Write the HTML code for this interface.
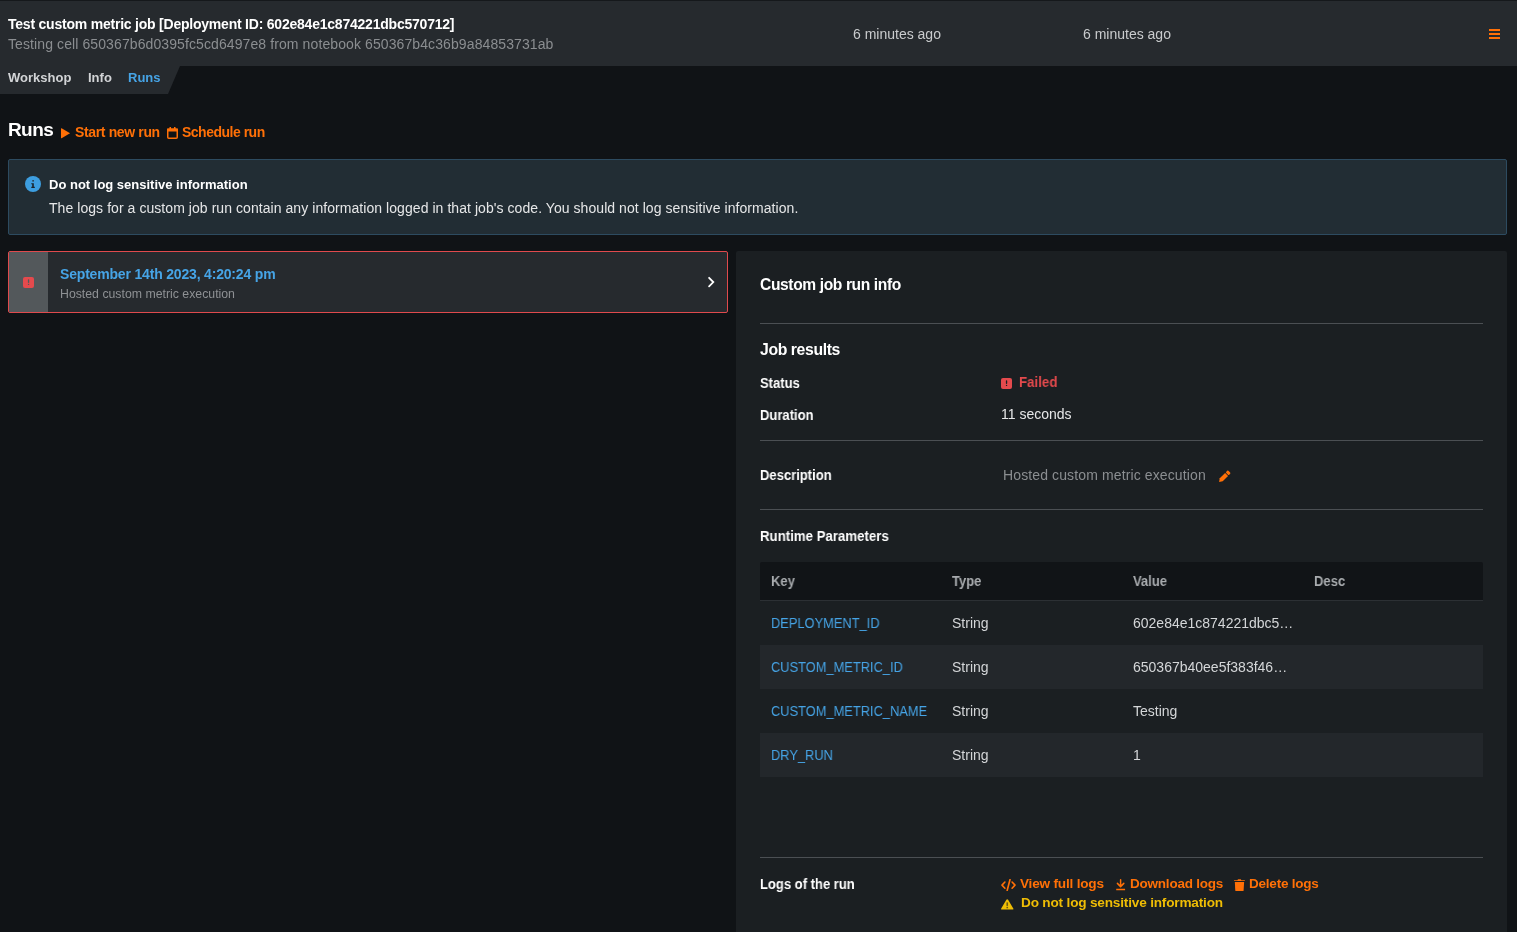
<!DOCTYPE html>
<html><head><meta charset="utf-8">
<style>
*{box-sizing:border-box;margin:0;padding:0}
html,body{width:1517px;height:932px;overflow:hidden;-webkit-font-smoothing:antialiased;background:#101316;font-family:"Liberation Sans",sans-serif;color:#e9eaeb}
.abs{position:absolute;white-space:nowrap;will-change:transform}
#topline{position:absolute;left:0;top:0;width:1517px;height:1px;background:#15181b}
#header{position:absolute;left:0;top:1px;width:1517px;height:65px;background:#262a2e}
#tabbar{position:absolute;left:0;top:66px;width:180px;height:28px;background:#262a2e;clip-path:polygon(0 0,180px 0,168px 28px,0 28px)}
.b{font-weight:bold}
.orange{color:#ff7007}
#alert{position:absolute;left:8px;top:159px;width:1499px;height:76px;background:#222d34;border:1px solid #2d4b60;border-radius:2px}
#card{position:absolute;left:8px;top:251px;width:720px;height:62px;background:#262a2e;border:1px solid #e04a4d;border-radius:2px;overflow:hidden}
#strip{position:absolute;left:0;top:0;width:39px;height:60px;background:#53585b}
#panel{position:absolute;left:736px;top:251px;width:771px;height:700px;background:#1b1f22;border-radius:2px}
.hr{position:absolute;left:760px;width:723px;height:1px;background:#4b4f53}
#table{position:absolute;left:760px;top:562px;width:723px}
.row{position:relative;height:44px}
.row.h{height:39px;background:#111417;border-bottom:1px solid #2c3034;border-radius:2px 2px 0 0}
.row.s{background:#23272b}
.cell{position:absolute;top:0;white-space:nowrap;font-size:14px;line-height:44px;will-change:transform}
.key{font-size:14px;transform:scaleX(0.918);transform-origin:0 0}
.h .cell{line-height:38px;font-weight:bold;color:#a9acaf;transform:scaleX(0.93);transform-origin:0 0}
.key{color:#46a4e6}
.val{color:#d4d6d8}
</style></head><body>
<div id="topline"></div>
<div id="header"></div>
<div id="tabbar"></div>

<div class="abs b" id="t_title" style="left:8px;top:14px;font-size:14px;letter-spacing:-0.22px;line-height:20px;color:#fff">Test custom metric job [Deployment ID: 602e84e1c874221dbc570712]</div>
<div class="abs" id="t_sub" style="left:8px;top:34px;font-size:14px;letter-spacing:0.1px;line-height:20px;color:#8b8e91">Testing cell 650367b6d0395fc5cd6497e8 from notebook 650367b4c36b9a84853731ab</div>
<div class="abs" id="t_time1" style="left:853px;top:24px;font-size:14px;line-height:20px;color:#c9cbcd">6 minutes ago</div>
<div class="abs" id="t_time2" style="left:1083px;top:24px;font-size:14px;line-height:20px;color:#c9cbcd">6 minutes ago</div>
<svg class="abs" style="left:1489px;top:29px" width="12" height="11" viewBox="0 0 12 11"><rect x="0" y="0" width="11" height="2" fill="#ff7007"/><rect x="0" y="4" width="11" height="2" fill="#ff7007"/><rect x="0" y="8" width="11" height="2" fill="#ff7007"/></svg>

<div class="abs b" id="tab1" style="left:8px;top:68px;font-size:13px;line-height:20px;color:#d2d4d6">Workshop</div>
<div class="abs b" id="tab2" style="left:88px;top:68px;font-size:13px;line-height:20px;color:#d2d4d6">Info</div>
<div class="abs b" id="tab3" style="left:128px;top:68px;font-size:13px;line-height:20px;color:#46a4e6">Runs</div>

<div class="abs b" id="h_runs" style="left:8px;top:118px;font-size:19px;letter-spacing:-0.6px;line-height:24px;color:#fff">Runs</div>
<svg class="abs" style="left:61px;top:128px" width="9" height="10.5" viewBox="0 0 9 10.5"><path d="M0.6 0.3 Q0 0 0 0.8 V9.7 Q0 10.5 0.6 10.2 L8.6 5.6 Q9 5.25 8.6 4.9 Z" fill="#ff7007"/></svg>
<div class="abs b orange" id="l_start" style="left:75px;top:123px;font-size:14px;letter-spacing:-0.36px;line-height:18px">Start new run</div>
<svg class="abs" style="left:167px;top:127px" width="11" height="12" viewBox="0 0 11 12"><rect x="0.75" y="2.25" width="9.5" height="9" rx="1" fill="none" stroke="#ff7007" stroke-width="1.5"/><rect x="0" y="1.5" width="11" height="3" fill="#ff7007"/><rect x="2.5" y="0" width="1.5" height="2" fill="#ff7007"/><rect x="7" y="0" width="1.5" height="2" fill="#ff7007"/></svg>
<div class="abs b orange" id="l_sched" style="left:182px;top:123px;font-size:14px;letter-spacing:-0.5px;line-height:18px">Schedule run</div>

<div id="alert"></div>
<svg class="abs" style="left:25px;top:176px" width="16" height="16" viewBox="0 0 16 16"><circle cx="8" cy="8" r="8" fill="#3d9ee0"/><rect x="7.3" y="4" width="1.6" height="1.6" fill="#2a3f50"/><path d="M6.3 7.2 H8.8 V10.8 H9.8 V12 H6.3 V10.8 H7.2 V8.3 H6.3 Z" fill="#1a2228"/></svg>
<div class="abs b" id="a_title" style="left:49px;top:176px;font-size:13px;line-height:18px;color:#fff">Do not log sensitive information</div>
<div class="abs" id="a_body" style="left:49px;top:199px;font-size:14px;letter-spacing:0.06px;line-height:18px;color:#e6e7e8">The logs for a custom job run contain any information logged in that job's code. You should not log sensitive information.</div>

<div id="card"><div id="strip"></div></div>
<svg class="abs" style="left:23px;top:277px" width="11" height="11" viewBox="0 0 11 11"><rect x="0" y="0" width="11" height="11" rx="2" fill="#e44a4d"/><rect x="4.9" y="2.3" width="1.3" height="3.6" rx="0.6" fill="#53585b"/><circle cx="5.55" cy="7.4" r="0.7" fill="#53585b"/></svg>
<div class="abs b" id="c_date" style="left:60px;top:265px;font-size:14px;letter-spacing:-0.18px;line-height:18px;color:#46a4e6">September 14th 2023, 4:20:24 pm</div>
<div class="abs" id="c_sub" style="left:60px;top:286px;font-size:12.3px;line-height:16px;color:#8e9194">Hosted custom metric execution</div>
<svg class="abs" style="left:707px;top:276px" width="9" height="12" viewBox="0 0 9 12"><path d="M2.1 1.8 L6.3 6.1 L2.1 10.3" fill="none" stroke="#fff" stroke-width="1.8" stroke-linecap="round" stroke-linejoin="miter"/></svg>

<div id="panel"></div>
<div class="abs b" id="p_title" style="left:760px;top:275px;font-size:15.6px;letter-spacing:-0.38px;line-height:20px;color:#fff">Custom job run info</div>
<div class="hr" style="top:323px"></div>
<div class="abs b" id="p_jr" style="left:760px;top:340px;font-size:15.8px;letter-spacing:-0.4px;line-height:20px;color:#fff">Job results</div>
<div class="abs b" id="p_status" style="left:760px;top:374px;font-size:14px;transform:scaleX(0.93);transform-origin:0 0;line-height:18px;color:#fff">Status</div>
<svg class="abs" style="left:1001px;top:377.5px" width="11" height="11" viewBox="0 0 11 11"><rect x="0" y="0" width="11" height="11" rx="2" fill="#e44a4d"/><rect x="4.9" y="2.3" width="1.3" height="3.6" rx="0.6" fill="#1b1f22"/><circle cx="5.55" cy="7.4" r="0.7" fill="#1b1f22"/></svg>
<div class="abs b" id="p_failed" style="left:1019px;top:373px;font-size:14px;transform:scaleX(0.95);transform-origin:0 0;line-height:18px;color:#e44a4d">Failed</div>
<div class="abs b" id="p_dur" style="left:760px;top:406px;font-size:14px;transform:scaleX(0.93);transform-origin:0 0;line-height:18px;color:#fff">Duration</div>
<div class="abs" id="p_durv" style="left:1001px;top:405px;font-size:14px;line-height:18px;color:#e6e7e8">11 seconds</div>
<div class="hr" style="top:440px"></div>
<div class="abs b" id="p_desc" style="left:760px;top:466px;font-size:14px;transform:scaleX(0.93);transform-origin:0 0;line-height:18px;color:#fff">Description</div>
<div class="abs" id="p_descv" style="left:1003px;top:466px;font-size:14px;letter-spacing:0.12px;line-height:18px;color:#8b8e91">Hosted custom metric execution</div>
<svg class="abs" style="left:1218px;top:469px" width="14" height="14" viewBox="0 0 14 14"><g transform="translate(1.1 12.9) rotate(-45)"><path d="M0 0 L3 -2.1 H10.6 V2.1 H3 Z" fill="#ff7007"/><rect x="11.4" y="-2.1" width="3" height="4.2" rx="0.9" fill="#ff7007"/></g></svg>
<div class="hr" style="top:509px"></div>
<div class="abs b" id="p_rp" style="left:760px;top:527px;font-size:14px;transform:scaleX(0.945);transform-origin:0 0;line-height:18px;color:#fff">Runtime Parameters</div>

<div id="table">
 <div class="row h"><div class="cell" id="th_key" style="left:11px">Key</div><div class="cell" id="th_type" style="left:192px">Type</div><div class="cell" id="th_val" style="left:373px">Value</div><div class="cell" id="th_desc" style="left:554px">Desc</div></div>
 <div class="row"><div class="cell key" id="k1" style="left:11px">DEPLOYMENT_ID</div><div class="cell val" id="ty1" style="left:192px">String</div><div class="cell val" id="v1" style="left:373px">602e84e1c874221dbc5…</div></div>
 <div class="row s"><div class="cell key" id="k2" style="left:11px">CUSTOM_METRIC_ID</div><div class="cell val" id="ty2" style="left:192px">String</div><div class="cell val" id="v2" style="left:373px">650367b40ee5f383f46…</div></div>
 <div class="row"><div class="cell key" id="k3" style="left:11px">CUSTOM_METRIC_NAME</div><div class="cell val" id="ty3" style="left:192px">String</div><div class="cell val" id="v3" style="left:373px">Testing</div></div>
 <div class="row s"><div class="cell key" id="k4" style="left:11px">DRY_RUN</div><div class="cell val" id="ty4" style="left:192px">String</div><div class="cell val" id="v4" style="left:373px">1</div></div>
</div>

<div class="hr" style="top:857px"></div>
<div class="abs b" id="p_logs" style="left:760px;top:875px;font-size:14px;transform:scaleX(0.93);transform-origin:0 0;line-height:18px;color:#fff">Logs of the run</div>
<svg class="abs" style="left:1001px;top:879px" width="15" height="12" viewBox="0 0 15 12"><path d="M3.9 3 L1 6.1 L3.9 9.2 M11.1 3 L14 6.1 L11.1 9.2" fill="none" stroke="#ff7007" stroke-width="1.6" stroke-linecap="round" stroke-linejoin="round"/><path d="M9 0.6 L6.2 11.4" fill="none" stroke="#ff7007" stroke-width="1.7" stroke-linecap="round"/></svg>
<div class="abs b orange" id="l_view" style="left:1020px;top:875px;font-size:13.6px;letter-spacing:-0.2px;line-height:18px">View full logs</div>
<svg class="abs" style="left:1116px;top:879px" width="10" height="12" viewBox="0 0 10 12"><path d="M4.6 0.8 V7.4 M1.4 4.4 L4.6 7.6 L7.8 4.4" fill="none" stroke="#ff7007" stroke-width="1.5" stroke-linecap="round" stroke-linejoin="round"/><rect x="0.2" y="9.8" width="8.9" height="1.5" rx="0.3" fill="#ff7007"/></svg>
<div class="abs b orange" id="l_dl" style="left:1130px;top:875px;font-size:13.5px;letter-spacing:-0.22px;line-height:18px">Download logs</div>
<svg class="abs" style="left:1233.8px;top:879px" width="11" height="12" viewBox="0 0 11 12"><path d="M0.4 1.2 H3.4 L4 0.3 H6.8 L7.4 1.2 H10.6 Q10.9 1.2 10.9 1.6 V2.1 H0 V1.6 Q0 1.2 0.4 1.2 Z" fill="#ff7007"/><path d="M0.8 3 H10.1 L9.6 11.4 Q9.5 12 8.9 12 H2 Q1.4 12 1.3 11.4 Z" fill="#ff7007"/></svg>
<div class="abs b orange" id="l_del" style="left:1249px;top:875px;font-size:13.5px;letter-spacing:-0.22px;line-height:18px">Delete logs</div>
<svg class="abs" style="left:1001px;top:898.5px" width="12.5" height="11" viewBox="0 0 12.5 11"><path d="M5.4 0.8 Q6.25 -0.4 7.1 0.8 L12.3 9.6 Q12.7 10.6 11.6 10.6 H0.9 Q-0.2 10.6 0.2 9.6 Z" fill="#efbd05"/><rect x="5.45" y="3.4" width="1.6" height="3.5" fill="#6b5a12"/><rect x="5.45" y="7.8" width="1.6" height="1.5" fill="#6b5a12"/></svg>
<div class="abs b" id="l_warn" style="left:1021px;top:894px;font-size:13.6px;letter-spacing:-0.18px;line-height:18px;color:#efbd05">Do not log sensitive information</div>

</body></html>
